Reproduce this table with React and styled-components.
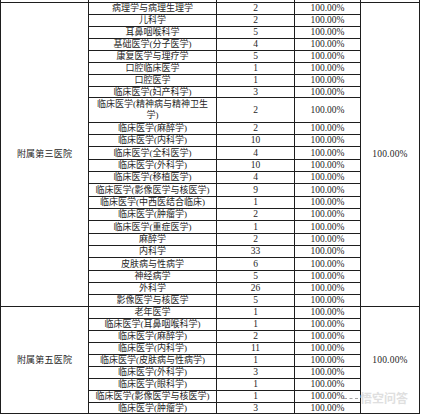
import React from 'react';
import styled, { createGlobalStyle } from 'styled-components';

const GlobalStyle = createGlobalStyle`
  html, body {
    margin: 0;
    padding: 0;
    background: #ffffff;
  }
  body {
    font-family: "Liberation Serif", "Noto Sans CJK SC", serif;
  }
`;

const Page = styled.div`
  position: relative;
  width: 424px;
  height: 416px;
  overflow: hidden;
  background: #ffffff;
`;

const Sheet = styled.div`
  display: grid;
  width: 420px;
  box-sizing: border-box;
  grid-template-columns: 87px 127px 77px 65px 58px;
  grid-template-rows: ${p => p.$rows};
  gap: 1px;
  padding: 0 1px 1px 1px;
  background: #1e1e1e;
`;

const Cell = styled.div`
  display: flex;
  align-items: center;
  justify-content: center;
  background: #ffffff;
  color: #262626;
  font-family: "Liberation Serif", "Noto Sans CJK SC", serif;
  font-size: ${p => (p.$num ? '9.5px' : '9px')};
  line-height: 11px;
  text-align: center;
  white-space: nowrap;
  overflow: hidden;
`;

const GroupCell = styled(Cell)`
  grid-row: span ${p => p.$span};
  letter-spacing: 0.2px;
`;

const Watermark = styled.div`
  position: absolute;
  left: 344px;
  top: 391px;
  display: flex;
  align-items: center;
  gap: 2px;
  color: #dcdcdc;
  font-family: "Noto Sans CJK SC", sans-serif;
  font-size: 12px;
  font-weight: 700;
  line-height: 14px;
  opacity: 0.9;
`;

const Dashes = styled.span`
  width: 14px;
  border-top: 1px dashed #9a9a9a;
`;

const groups = [
  {
    name: '附属第三医院',
    rate: '100.00%',
    rows: [
      ['病理学与病理生理学', '2', 12],
      ['儿科学', '2', 12],
      ['耳鼻咽喉科学', '5', 12],
      ['基础医学(分子医学)', '4', 12],
      ['康复医学与理疗学', '5', 12],
      ['口腔临床医学', '1', 12],
      ['口腔医学', '1', 12],
      ['临床医学(妇产科学)', '3', 11],
      [['临床医学(精神病与精神卫生', '学)'], '2', 25],
      ['临床医学(麻醉学)', '2', 12],
      ['临床医学(内科学)', '10', 12],
      ['临床医学(全科医学)', '4', 13],
      ['临床医学(外科学)', '10', 12],
      ['临床医学(移植医学)', '4', 12],
      ['临床医学(影像医学与核医学)', '9', 13],
      ['临床医学(中西医结合临床)', '1', 12],
      ['临床医学(肿瘤学)', '2', 12],
      ['临床医学(重症医学)', '1', 13],
      ['麻醉学', '2', 12],
      ['内科学', '33', 12],
      ['皮肤病与性病学', '6', 13],
      ['神经病学', '5', 12],
      ['外科学', '26', 12],
      ['影像医学与核医学', '5', 12],
    ],
  },
  {
    name: '附属第五医院',
    rate: '100.00%',
    rows: [
      ['老年医学', '1', 12],
      ['临床医学(耳鼻咽喉科学)', '1', 12],
      ['临床医学(麻醉学)', '2', 12],
      ['临床医学(内科学)', '11', 12],
      ['临床医学(皮肤病与性病学)', '1', 12],
      ['临床医学(外科学)', '3', 12],
      ['临床医学(眼科学)', '1', 12],
      ['临床医学(影像医学与核医学)', '1', 12],
      ['临床医学(肿瘤学)', '3', 11],
    ],
  },
];

const rowTemplate = ['2px']
  .concat(groups.flatMap(g => g.rows.map(r => `${r[2] - 1}px`)))
  .join(' ');

const Major = ({ label }) =>
  Array.isArray(label) ? (
    <span>
      {label[0]}
      <br />
      {label[1]}
    </span>
  ) : (
    label
  );

const App = () => (
  <Page>
    <GlobalStyle />
    <Sheet $rows={rowTemplate}>
      {/* row cut off at the top edge */}
      <Cell />
      <Cell />
      <Cell />
      <Cell />
      <Cell />
      {groups.map(group =>
        group.rows.map((row, i) => (
          <React.Fragment key={group.name + i}>
            {i === 0 && <GroupCell $span={group.rows.length}>{group.name}</GroupCell>}
            <Cell>
              <Major label={row[0]} />
            </Cell>
            <Cell $num>{row[1]}</Cell>
            <Cell $num>100.00%</Cell>
            {i === 0 && (
              <GroupCell $num $span={group.rows.length}>
                {group.rate}
              </GroupCell>
            )}
          </React.Fragment>
        ))
      )}
    </Sheet>
    <Watermark>
      <Dashes />
      悟空问答
    </Watermark>
  </Page>
);

export default App;
